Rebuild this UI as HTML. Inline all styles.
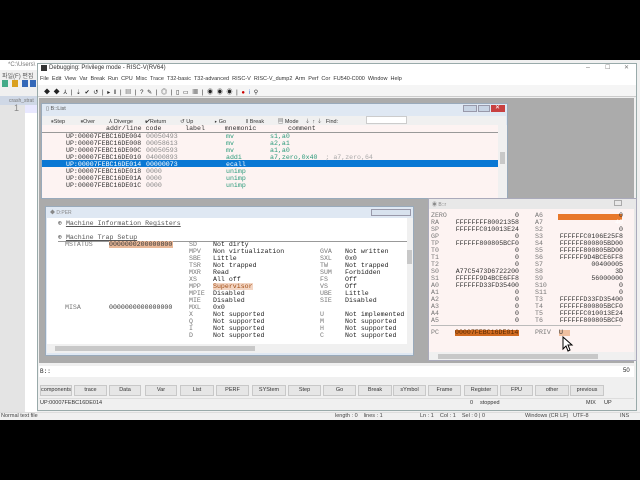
<!DOCTYPE html>
<html><head><meta charset="utf-8"><style>
*{margin:0;padding:0;box-sizing:border-box}
body{width:640px;height:480px;background:#000;position:relative;overflow:hidden;font-family:"Liberation Sans","Noto Sans CJK KR",sans-serif;font-size:6px;color:#222}
.a{position:absolute;white-space:pre}
.m{font-family:"Liberation Mono","DejaVu Sans Mono",monospace;font-size:6.6px;line-height:7px}
.btn{position:absolute;top:385px;height:11px;background:#e6e6e6;border:1px solid #c8c8c8;font-size:5.5px;text-align:center;line-height:9px;color:#333}
</style></head><body>
<div class="a" style="left:0;top:60px;width:640px;height:360px;background:#f0f0f0"></div>
<div class="a" style="left:0;top:60px;width:40px;height:10px;background:#fff"></div>
<div class="a" style="left:8px;top:62px;font-size:6px;color:#777">*C:\Users\</div>
<div class="a" style="left:2px;top:71px;font-size:6px;color:#555">파일(F) 편집</div>
<div class="a" style="left:2px;top:80px;width:34px;height:7px;background:linear-gradient(90deg,#4a8 0 6px,transparent 6px 10px,#d9a020 10px 16px,transparent 16px 20px,#3468b8 20px 26px,transparent 26px 28px,#3468b8 28px 34px)"></div>
<div class="a" style="left:0;top:96px;width:37px;height:9px;background:#cfd8e6"></div>
<div class="a" style="left:9px;top:98px;font-size:5px;color:#777">crash_strat</div>
<div class="a" style="left:0;top:105px;width:25px;height:307px;background:#e4e4e4"></div>
<div class="a" style="left:25px;top:105px;width:12px;height:307px;background:#fff"></div>
<div class="a" style="left:25px;top:105px;width:12px;height:8px;background:#e8e8ff"></div>
<div class="a" style="left:14px;top:103px;font-size:9px;color:#888">1</div>
<div class="a" style="left:0;top:412px;width:640px;height:8px;background:#f0f0f0;border-top:1px solid #ddd"></div>
<div class="a" style="left:1px;top:413px;font-size:5.5px;color:#444">Normal text file</div>
<div class="a" style="left:335px;top:413px;font-size:5.5px;color:#444">length : 0    lines : 1</div>
<div class="a" style="left:420px;top:413px;font-size:5.5px;color:#444">Ln : 1    Col : 1    Sel : 0 | 0</div>
<div class="a" style="left:525px;top:413px;font-size:5.5px;color:#444">Windows (CR LF)   UTF-8</div>
<div class="a" style="left:620px;top:413px;font-size:5.5px;color:#444">INS</div>

<div class="a" style="left:37px;top:63px;width:600px;height:348px;background:#f0f0f0;border:1px solid #9aa"></div>
<div class="a" style="left:38px;top:64px;width:598px;height:21px;background:#fff"></div>
<div class="a" style="left:41px;top:65px;width:6px;height:6px;background:#333"></div>
<div class="a" style="left:49px;top:65px;font-size:6px;color:#333">Debugging: Privilege mode - RISC-V(RV64)</div>
<div class="a" style="left:586px;top:64px;font-size:7px;color:#777">–</div>
<div class="a" style="left:605px;top:64px;font-size:6px;color:#777">☐</div>
<div class="a" style="left:624px;top:64px;font-size:6px;color:#777">✕</div>
<div class="a" style="left:40px;top:76px;font-size:5.5px;color:#333">File  Edit  View  Var  Break  Run  CPU  Misc  Trace  T32-basic  T32-advanced  RISC-V  RISC-V_dump2  Arm  Perf  Cor  FU540-C000  Window  Help</div>
<div class="a" style="left:38px;top:85px;width:598px;height:12px;background:#f5f5f5;border-bottom:1px solid #ccc"></div>
<div class="a" style="left:44px;top:87px;font-size:6px;color:#222;letter-spacing:1px">◆ ◆ ⅄ | ⇣ ✔ ↺ | ▸ ǁ | ▤ | ? ✎ | ◎ | ▯ ▭ ▦ | ◉ ◉ ◉ | <span style="color:#c00">●</span> <span style="color:#36c">i</span> ⚲</div>
<div class="a" style="left:39px;top:98px;width:595px;height:265px;background:#ababab"></div>
<div class="a" style="left:39px;top:366px;width:595px;height:11px;background:#fff"></div>
<div class="a m" style="left:40px;top:368px;font-size:6px">B::</div>
<div class="a" style="left:623px;top:368px;font-size:6px">50</div>
<div class="btn" style="left:40px;width:32px">components</div>
<div class="btn" style="left:74px;width:33px">trace</div>
<div class="btn" style="left:109px;width:32px">Data</div>
<div class="btn" style="left:145px;width:32px">Var</div>
<div class="btn" style="left:180px;width:34px">List</div>
<div class="btn" style="left:216px;width:33px">PERF</div>
<div class="btn" style="left:252px;width:34px">SYStem</div>
<div class="btn" style="left:288px;width:33px">Step</div>
<div class="btn" style="left:323px;width:33px">Go</div>
<div class="btn" style="left:358px;width:34px">Break</div>
<div class="btn" style="left:393px;width:33px">sYmbol</div>
<div class="btn" style="left:428px;width:33px">Frame</div>
<div class="btn" style="left:464px;width:34px">Register</div>
<div class="btn" style="left:500px;width:33px">FPU</div>
<div class="btn" style="left:535px;width:34px">other</div>
<div class="btn" style="left:570px;width:34px">previous</div>
<div class="a" style="left:39px;top:398px;width:595px;height:10px;background:#f0f0f0;border-top:1px solid #ddd"></div>
<div class="a" style="left:40px;top:400px;font-size:5.5px;color:#333">UP:00007FEBC16DE014</div>
<div class="a" style="left:470px;top:400px;font-size:5.5px;color:#333">0</div>
<div class="a" style="left:480px;top:400px;font-size:5.5px;color:#333">stopped</div>
<div class="a" style="left:586px;top:400px;font-size:5.5px;color:#333">MIX</div>
<div class="a" style="left:604px;top:400px;font-size:5.5px;color:#333">UP</div>

<div class="a" style="left:41px;top:103px;width:467px;height:96px;background:#dfe8f3;border:1px solid #9ab"></div>
<div class="a" style="left:46px;top:106px;font-size:5.5px;color:#555">▯ B::List</div>
<div class="a" style="left:463px;top:105px;width:14px;height:7px;background:#c8d4e4;border:1px solid #99a"></div>
<div class="a" style="left:478px;top:105px;width:12px;height:7px;background:#c8d4e4;border:1px solid #99a"></div>
<div class="a" style="left:491px;top:105px;width:14px;height:7px;background:#c84040"></div>
<div class="a" style="left:495px;top:104px;font-size:6px;color:#fff">✕</div>
<div class="a" style="left:42px;top:116px;width:464px;height:9px;background:#f0f0f0"></div>
<div class="a" style="left:51px;top:117px;font-size:5.5px;color:#333">⏸Step          ⏸Over         ⅄ Diverge        ✔Return         ↺ Up              ▸ Go             ǁ Break         ▤ Mode     ⇣  ↑  ⇣   Find:</div>
<div class="a" style="left:366px;top:116px;width:41px;height:8px;background:#fff;border:1px solid #ccc"></div>
<div class="a" style="left:42px;top:125px;width:456px;height:73px;background:#fdf3f2"></div>
<div class="a m" style="left:106px;top:125px;color:#333">addr/line code      label     mnemonic        comment</div>
<div class="a" style="left:42px;top:132px;width:456px;height:1px;background:#999"></div>
<div class="a" style="left:42px;top:160px;width:456px;height:7px;background:#0a78d4"></div>
<div class="a m" style="left:66px;top:133px;color:#333">UP:00007FEBC16DE004
UP:00007FEBC16DE008
UP:00007FEBC16DE00C
UP:00007FEBC16DE010
<span style="color:#fff">UP:00007FEBC16DE014</span>
UP:00007FEBC16DE018
UP:00007FEBC16DE01A
UP:00007FEBC16DE01C</div>
<div class="a m" style="left:146px;top:133px;color:#888">00050493
00058613
00050593
04000893
<span style="color:#fff">00000073</span>
0000
0000
0000</div>
<div class="a m" style="left:226px;top:133px;color:#2a9a7a">mv
mv
mv
addi
<span style="color:#fff">ecall</span>
unimp
unimp
unimp</div>
<div class="a m" style="left:270px;top:133px;color:#2a9a7a">s1,a0
a2,a1
a1,a0
a7,zero,0x40  <span style="color:#aaa">; a7,zero,64</span></div>
<div class="a" style="left:498px;top:125px;width:9px;height:73px;background:#f0f0f0"></div>
<div class="a" style="left:500px;top:152px;width:5px;height:12px;background:#c8c8c8"></div>

<div class="a" style="left:45px;top:206px;width:369px;height:150px;background:#dfe8f3;border:1px solid #9ab"></div>
<div class="a" style="left:50px;top:209px;font-size:5px;color:#888">◆ D:PER</div>
<div class="a" style="left:371px;top:209px;width:40px;height:7px;border:1px solid #99a;background:#d8e2ee"></div>
<div class="a" style="left:47px;top:218px;width:360px;height:126px;background:#fff"></div>
<div class="a" style="left:407px;top:218px;width:6px;height:126px;background:#f0f0f0"></div>
<div class="a" style="left:407px;top:250px;width:5px;height:14px;background:#c8c8c8"></div>
<div class="a" style="left:47px;top:344px;width:366px;height:9px;background:#f0f0f0"></div>
<div class="a" style="left:55px;top:346px;width:200px;height:5px;background:#c8c8c8"></div>
<div class="a m" style="left:58px;top:220px;color:#555">⊕ <span style="text-decoration:underline">Machine Information Registers</span>

⊕ <span style="text-decoration:underline">Machine Trap Setup</span></div>
<div class="a" style="left:58px;top:241px;width:349px;height:1px;background:#999"></div>
<div class="a m" style="left:65px;top:241px;color:#777">MSTATUS








MISA</div>
<div class="a" style="left:109px;top:241px;width:64px;height:7px;background:#e9b898"></div>
<div class="a m" style="left:109px;top:241px;color:#333">0000000200000800








0000000000000000</div>
<div class="a m" style="left:189px;top:241px;color:#777">SD
MPV
SBE
TSR
MXR
XS
MPP
MPIE
MIE
MXL
X
Q
I
D</div>
<div class="a" style="left:213px;top:283px;width:40px;height:7px;background:#f3d6c4"></div>
<div class="a m" style="left:213px;top:241px;color:#222">Not dirty
Non virtualization
Little
Not trapped
Read
All off
<span style="color:#a04a10">Supervisor</span>
Disabled
Disabled
0x0
Not supported
Not supported
Not supported
Not supported</div>
<div class="a m" style="left:320px;top:241px;color:#777">
GVA
SXL
TW
SUM
FS
VS
UBE
SIE

U
M
H
C</div>
<div class="a m" style="left:345px;top:241px;color:#222">
Not written
0x0
Not trapped
Forbidden
Off
Off
Little
Disabled

Not implemented
Not supported
Not supported
Not supported</div>

<div class="a" style="left:428px;top:198px;width:209px;height:163px;background:#e8e8e8;border:1px solid #aab"></div>
<div class="a" style="left:432px;top:201px;font-size:5px;color:#888">◉ B::r</div>
<div class="a" style="left:614px;top:200px;width:8px;height:6px;border:1px solid #aaa"></div>
<div class="a" style="left:429px;top:209px;width:205px;height:143px;background:#fdf3f2"></div>
<div class="a" style="left:429px;top:352px;width:205px;height:8px;background:#f0f0f0"></div>
<div class="a" style="left:438px;top:354px;width:160px;height:5px;background:#c8c8c8"></div>
<div class="a" style="left:558px;top:214px;width:64px;height:6px;background:#e8782a"></div>
<div class="a m" style="left:431px;top:212px;color:#777">ZERO
RA
SP
GP
TP
T0
T1
T2
S0
S1
A0
A1
A2
A3
A4
A5</div>
<div class="a m" style="left:434px;top:212px;width:85px;text-align:right;color:#333">0
FFFFFFFF80021358
FFFFFFC010013E24
0
FFFFFF800805BCF0
0
0
0
A77C5473D6722200
FFFFFF9D4BCE6FF8
FFFFFFD33FD35400
0
0
0
0
0</div>
<div class="a m" style="left:535px;top:212px;color:#777">A6
A7
S2
S3
S4
S5
S6
S7
S8
S9
S10
S11
T3
T4
T5
T6</div>
<div class="a m" style="left:540px;top:212px;width:83px;text-align:right;color:#333">0
<span style="color:#fff">40</span>
0
FFFFFFC0106E25F8
FFFFFF800805BD00
FFFFFF800805BD00
FFFFFF9D4BCE6FF8
00400005
3D
56000000
0
0
FFFFFFD33FD35400
FFFFFF800805BCF0
FFFFFFC010013E24
FFFFFF800805BCF0</div>
<div class="a" style="left:431px;top:325px;width:190px;height:1px;background:#bbb"></div>
<div class="a" style="left:455px;top:330px;width:64px;height:6px;background:#d06a20"></div>
<div class="a" style="left:559px;top:330px;width:11px;height:6px;background:#f0c0a0"></div>
<div class="a m" style="left:431px;top:329px;color:#777">PC</div>
<div class="a m" style="left:455px;top:329px;color:#5a2a00">00007FEBC16DE014</div>
<div class="a m" style="left:535px;top:329px;color:#777">PRIV</div>
<div class="a m" style="left:559px;top:329px;color:#333">U</div>
<svg class="a" style="left:562px;top:336px" width="12" height="16" viewBox="0 0 12 16"><path d="M1 1 L1 13 L4 10 L6 15 L8 14 L6 9 L10 9 Z" fill="#fff" stroke="#000" stroke-width="1"/></svg>
</body></html>
